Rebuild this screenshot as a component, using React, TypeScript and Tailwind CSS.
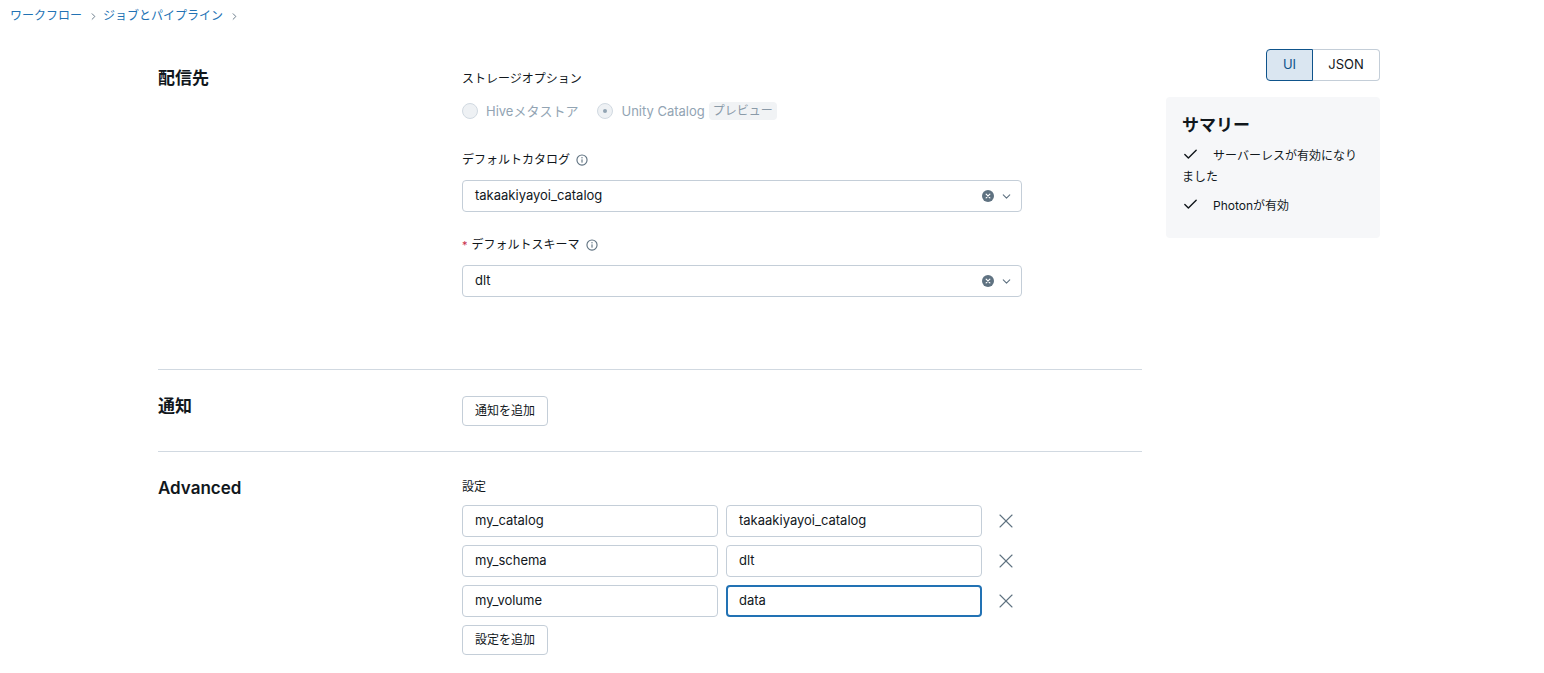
import { ChevronDown, ChevronRight, X, Check } from 'lucide-react'

const font = { fontFamily: 'Inter, "Noto Sans CJK JP", sans-serif' }

function InfoIcon() {
  return (
    <svg width="12" height="12" viewBox="0 0 16 16" fill="none" className="inline-block">
      <circle cx="8" cy="8" r="6.75" stroke="#5f7281" strokeWidth="1.5" />
      <rect x="7.25" y="7" width="1.5" height="4.5" rx="0.5" fill="#5f7281" />
      <circle cx="8" cy="5" r="0.9" fill="#5f7281" />
    </svg>
  )
}

function ClearIcon() {
  return (
    <svg width="12" height="12" viewBox="0 0 16 16">
      <circle cx="8" cy="8" r="8" fill="#5f7281" />
      <path d="M5.5 5.5l5 5M10.5 5.5l-5 5" stroke="#fff" strokeWidth="1.6" strokeLinecap="round" />
    </svg>
  )
}

function SelectBox({ value }: { value: string }) {
  return (
    <div className="mt-[10px] h-8 w-[560px] flex items-center border border-[#c4ced8] rounded-[4px] pl-[12px] pr-[8px] text-[13px] text-[#11171c]">
      <span className="flex-1">{value}</span>
      <ClearIcon />
      <ChevronDown className="ml-[6px] w-[13px] h-[13px] text-[#5f7281]" strokeWidth={2} />
    </div>
  )
}

function Field({ value, focused }: { value: string; focused?: boolean }) {
  return (
    <div
      className={
        focused
          ? 'h-8 w-[256px] flex items-center rounded-[4px] border-2 border-[#2272b4] pl-[11px] text-[13px] text-[#11171c]'
          : 'h-8 w-[256px] flex items-center rounded-[4px] border border-[#c4ced8] pl-[12px] text-[13px] text-[#11171c]'
      }
    >
      {value}
    </div>
  )
}

const rows = [
  ['my_catalog', 'takaakiyayoi_catalog'],
  ['my_schema', 'dlt'],
  ['my_volume', 'data'],
]

export default function App() {
  return (
    <div className="min-h-screen bg-white text-[#11171c]" style={font}>
      {/* Breadcrumb */}
      <div className="h-8 pt-[8px] px-[10px] flex items-start text-[12px] leading-4">
        <span className="text-[#2272b4]">ワークフロー</span>
        <ChevronRight className="ml-[6px] mr-[4px] mt-[3px] w-[11px] h-[11px] text-[#5f7281]" />
        <span className="text-[#2272b4]">ジョブとパイプライン</span>
        <ChevronRight className="ml-[6px] mt-[3px] w-[11px] h-[11px] text-[#5f7281]" />
      </div>

      <div className="flex pl-[158px] pt-[17px] gap-6">
        {/* Main form */}
        <div className="w-[984px]">
          {/* 配信先 */}
          <section className="grid grid-cols-[304px_1fr] pt-[18px] pb-[72px]">
            <h2 className="text-[17px] font-semibold leading-6 -mt-[1px]">配信先</h2>
            <div>
              <div className="mt-[2px] text-[12px] leading-5">ストレージオプション</div>
              <div className="mt-[12px] flex items-center text-[13px] leading-5 text-[#92a4b3]">
                <span className="w-4 h-4 rounded-full border border-[#d1d9e1] bg-[#eef1f4]" />
                <span className="ml-2">Hiveメタストア</span>
                <span className="ml-[19px] w-4 h-4 rounded-full border border-[#d1d9e1] bg-[#eef1f4] flex items-center justify-center">
                  <span className="w-[4px] h-[4px] rounded-full bg-[#92a4b3]" />
                </span>
                <span className="ml-2">Unity Catalog</span>
                <span className="ml-[4px] px-[4px] rounded-[4px] bg-[#f1f3f5] text-[12px] leading-[18px] text-[#8a9aa8]">プレビュー</span>
              </div>

              <div className="mt-[29px] flex items-center gap-[6px] text-[12px] leading-5">
                デフォルトカタログ <InfoIcon />
              </div>
              <SelectBox value="takaakiyayoi_catalog" />

              <div className="mt-[23px] flex items-center text-[12px] leading-5">
                <span className="text-[#c82d4c] mr-[4px] text-[11px]">*</span>
                デフォルトスキーマ
                <span className="ml-[6px] flex"><InfoIcon /></span>
              </div>
              <SelectBox value="dlt" />
            </div>
          </section>

          {/* 通知 */}
          <section className="grid grid-cols-[304px_1fr] border-t border-[#d1d9e1] pt-[26px] pb-[25px]">
            <h2 className="text-[17px] font-semibold leading-6 -mt-[2px]">通知</h2>
            <div>
              <button className="h-[30px] px-[12px] rounded-[4px] border border-[#c4ced8] text-[12px] bg-white">
                通知を追加
              </button>
            </div>
          </section>

          {/* Advanced */}
          <section className="grid grid-cols-[304px_1fr] border-t border-[#d1d9e1] pt-[24px] pb-6">
            <h2 className="text-[17px] font-semibold leading-6">Advanced</h2>
            <div>
              <div className="mt-[1px] text-[12px] leading-5">設定</div>
              <div className="mt-[8px] flex flex-col gap-2">
                {rows.map(([k, v], i) => (
                  <div key={k} className="flex items-center gap-2">
                    <Field value={k} />
                    <Field value={v} focused={i === 2} />
                    <button className="ml-[4px] w-6 h-6 flex items-center justify-center text-[#5f7281]">
                      <X className="w-6 h-6" strokeWidth={1.1} />
                    </button>
                  </div>
                ))}
              </div>
              <button className="mt-2 h-[30px] px-[12px] rounded-[4px] border border-[#c4ced8] text-[12px] bg-white">
                設定を追加
              </button>
            </div>
          </section>
        </div>

        {/* Right column */}
        <div className="w-[214px]">
          <div className="flex justify-end">
            <button className="h-8 w-[47px] rounded-l-[4px] border border-[#0e538b] bg-[#dae6f1] text-[13px] text-[#0e538b]">
              UI
            </button>
            <button className="h-8 w-[67px] rounded-r-[4px] border border-l-0 border-[#c4ced8] text-[13px] text-[#11171c]">
              JSON
            </button>
          </div>
          <div className="mt-4 rounded-[4px] bg-[#f6f7f9] px-4 pt-[16px] pb-[22px]">
            <div className="text-[17px] font-semibold leading-6">サマリー</div>
            <div className="mt-[8px] text-[12px] leading-[21px]">
              <Check className="inline-block w-[17px] h-[17px] -mt-[4px] mr-[14px]" strokeWidth={2} />
              サーバーレスが有効になりました
            </div>
            <div className="mt-[8px] text-[12px] leading-[21px]">
              <Check className="inline-block w-[17px] h-[17px] -mt-[4px] mr-[14px]" strokeWidth={2} />
              Photonが有効
            </div>
          </div>
        </div>
      </div>
    </div>
  )
}
